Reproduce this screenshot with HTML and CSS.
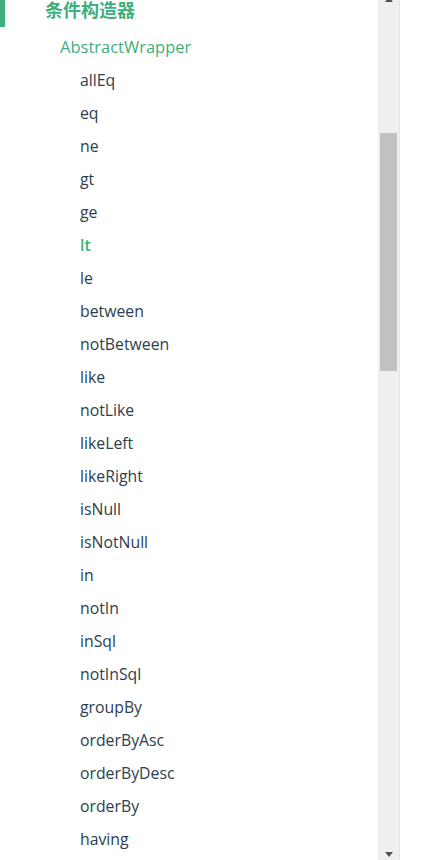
FILE: index.html
```html
<!DOCTYPE html>
<html lang="zh-CN">
<head>
    <meta charset="UTF-8">
    <meta name="viewport" content="width=device-width, initial-scale=1.0">
    <title>条件构造器</title>
    <link rel="stylesheet" href="styles.css">
</head>
<body>
    <div class="layout">
        <!-- Sidebar (scrolled) -->
        <aside class="sidebar">
            <div class="sidebar-heading">条件构造器</div>
            <div class="group-title">AbstractWrapper</div>
            <ul class="sub-links">
                <li><a class="sub-link">allEq</a></li>
                <li><a class="sub-link">eq</a></li>
                <li><a class="sub-link">ne</a></li>
                <li><a class="sub-link">gt</a></li>
                <li><a class="sub-link">ge</a></li>
                <li><a class="sub-link active">lt</a></li>
                <li><a class="sub-link">le</a></li>
                <li><a class="sub-link">between</a></li>
                <li><a class="sub-link">notBetween</a></li>
                <li><a class="sub-link">like</a></li>
                <li><a class="sub-link">notLike</a></li>
                <li><a class="sub-link">likeLeft</a></li>
                <li><a class="sub-link">likeRight</a></li>
                <li><a class="sub-link">isNull</a></li>
                <li><a class="sub-link">isNotNull</a></li>
                <li><a class="sub-link">in</a></li>
                <li><a class="sub-link">notIn</a></li>
                <li><a class="sub-link">inSql</a></li>
                <li><a class="sub-link">notInSql</a></li>
                <li><a class="sub-link">groupBy</a></li>
                <li><a class="sub-link">orderByAsc</a></li>
                <li><a class="sub-link">orderByDesc</a></li>
                <li><a class="sub-link">orderBy</a></li>
                <li><a class="sub-link">having</a></li>
            </ul>
        </aside>

        <!-- Scrollbar -->
        <div class="scrollbar">
            <div class="arrow arrow-up"></div>
            <div class="track">
                <div class="thumb"></div>
            </div>
            <div class="arrow arrow-down"></div>
        </div>
    </div>
</body>
</html>
```

FILE: styles.css
```css
body {
    margin: 0;
    padding: 0;
    background-color: #fff;
    font-family: 'Open Sans', 'Noto Sans CJK SC', sans-serif;
    color: #2c3e50;
    overflow: hidden;
}
.layout {
    display: flex;
    height: 860px;
    width: 400px;
}
.sidebar {
    flex: 1;
    overflow: hidden;
}
.sidebar-heading {
    height: 27px;
    padding-left: 40px;
    border-left: 5px solid #3eaf7c;
    font-family: 'Noto Sans CJK SC', sans-serif;
    font-size: 18px;
    font-weight: bold;
    line-height: 18px;
    color: #3eaf7c;
}
.group-title {
    height: 33px;
    margin-top: 3px;
    padding-left: 60px;
    font-size: 16.5px;
    line-height: 33px;
    color: #3eaf7c;
}
.sub-links {
    list-style: none;
    margin: 1px 0 0 0;
    padding: 0;
}
.sub-link {
    display: block;
    height: 33px;
    padding-left: 80px;
    font-size: 15.8px;
    line-height: 33px;
    color: #2c3e50;
}
.sub-link.active {
    color: #3eaf7c;
    font-weight: 600;
}
.scrollbar {
    width: 22px;
    display: flex;
    flex-direction: column;
    align-items: center;
    background-color: #efefef;
    border-right: 1px solid #e4e4e4;
    box-sizing: border-box;
}
.arrow {
    width: 0;
    height: 0;
    border-left: 4.5px solid transparent;
    border-right: 4.5px solid transparent;
}
.arrow-up {
    margin-top: -3px;
    border-bottom: 5px solid #505050;
}
.arrow-down {
    margin-bottom: 3px;
    border-top: 5px solid #505050;
}
.track {
    flex: 1;
    width: 100%;
    padding: 0 2px 0 2px;
    box-sizing: border-box;
}
.thumb {
    margin-top: 131px;
    width: 17px;
    height: 238px;
    background-color: #c1c1c1;
}
```
